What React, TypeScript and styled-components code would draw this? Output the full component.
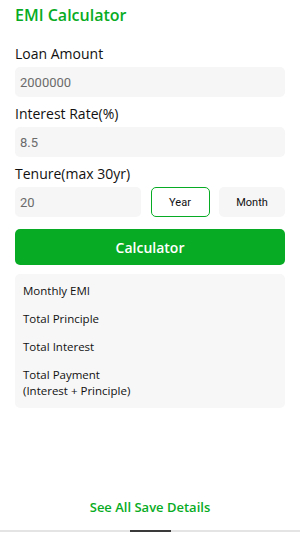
import styled, { createGlobalStyle } from 'styled-components';

const GREEN = '#08ac24';

const GlobalStyle = createGlobalStyle`
  html, body {
    margin: 0;
    padding: 0;
    background: #ffffff;
  }
  * {
    box-sizing: border-box;
  }
`;

const results = ['Monthly EMI', 'Total Principle', 'Total Interest'];

export default function App() {
  return (
    <>
      <GlobalStyle />
      <SPage>
        <STitle>EMI Calculator</STitle>

        <SLabel first>Loan Amount</SLabel>
        <SField>2000000</SField>

        <SLabel>Interest Rate(%)</SLabel>
        <SField>8.5</SField>

        <SLabel>Tenure(max 30yr)</SLabel>
        <STenureRow>
          <SField>20</SField>
          <SUnit active>Year</SUnit>
          <SUnit>Month</SUnit>
        </STenureRow>

        <SButton>Calculator</SButton>

        <SResultCard>
          {results.map((r) => (
            <SResultItem key={r}>{r}</SResultItem>
          ))}
          <SResultItem>
            Total Payment
            <br />
            (Interest + Principle)
          </SResultItem>
        </SResultCard>

        <SFooterLink>See All Save Details</SFooterLink>
        <SBottomBar>
          <SThumb />
        </SBottomBar>
      </SPage>
    </>
  );
}

const SPage = styled.div`
  display: flex;
  flex-direction: column;
  min-height: 533px;
  padding: 5px 15px 0;
  font-family: 'Open Sans', 'Liberation Sans', sans-serif;
  color: #111;
`;

const STitle = styled.h1`
  margin: 0;
  font-size: 16px;
  font-weight: 600;
  line-height: 20px;
  color: ${GREEN};
`;

const SLabel = styled.div<{ first?: boolean }>`
  margin-top: ${(p) => (p.first ? '20px' : '8px')};
  margin-bottom: 4px;
  font-size: 14px;
  line-height: 18px;
  color: #111;
`;

const SField = styled.div`
  display: flex;
  align-items: center;
  height: 30px;
  padding: 0 5px;
  border-radius: 5px;
  background: #f6f6f6;
  font-family: Roboto, 'Liberation Sans', sans-serif;
  font-size: 13px;
  color: #6b6b6b;
`;

const STenureRow = styled.div`
  display: grid;
  grid-template-columns: 126px 59px 66px;
  justify-content: space-between;
  height: 30px;
`;

const SUnit = styled.div<{ active?: boolean }>`
  display: flex;
  align-items: center;
  justify-content: center;
  border-radius: 5px;
  background: ${(p) => (p.active ? '#ffffff' : '#f6f6f6')};
  border: ${(p) => (p.active ? `1.5px solid ${GREEN}` : 'none')};
  font-family: Roboto, 'Liberation Sans', sans-serif;
  font-size: 11px;
  color: #111;
`;

const SButton = styled.button`
  margin-top: 12px;
  height: 36px;
  border: none;
  border-radius: 5px;
  background: ${GREEN};
  color: #fff;
  font-family: 'Open Sans', 'Liberation Sans', sans-serif;
  font-size: 14px;
  font-weight: 600;
`;

const SResultCard = styled.div`
  display: flex;
  flex-direction: column;
  gap: 12px;
  margin-top: 9px;
  padding: 9px 8px;
  border-radius: 5px;
  background: #f7f7f7;
`;

const SResultItem = styled.div`
  font-size: 11.5px;
  line-height: 16px;
  color: #111;
`;

const SFooterLink = styled.div`
  margin-top: auto;
  margin-bottom: 14px;
  text-align: center;
  font-size: 13px;
  font-weight: 600;
  color: ${GREEN};
`;

const SBottomBar = styled.div`
  display: flex;
  justify-content: center;
  margin: 0 -15px 1px;
  height: 2px;
  background: #e4e4e4;
`;

const SThumb = styled.div`
  width: 41px;
  height: 2px;
  background: #3a3a3a;
`;
